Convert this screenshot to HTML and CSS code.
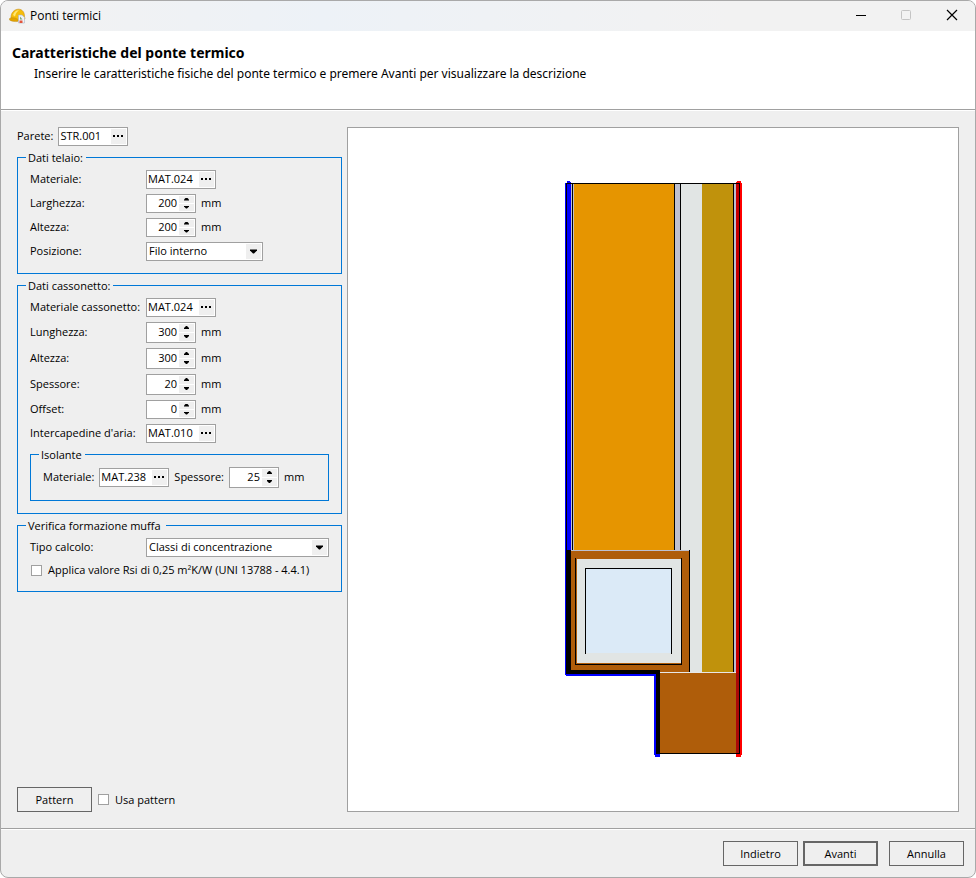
FILE: index.html
```html
<!DOCTYPE html>
<html lang="it">
<head>
<meta charset="utf-8">
<title>Ponti termici</title>
<link rel="stylesheet" href="styles.css">
</head>
<body>
<div class="window">
  <header class="titlebar">
    <svg class="app-icon" width="17" height="16" viewBox="0 0 17 16" aria-hidden="true">
      <path d="M2 9.500C2 5 5 1.200 9.500 1.200c3.800 0 6 3 6 7.300L16 11l-5 2-9-1z" fill="#f5bd0a" stroke="#c98f10" stroke-width=".6"/>
      <path d="M4 7C5 3.500 7.500 2 10 2.200 8.500 3.500 6.500 5 6 8.500z" fill="#ffe873"/>
      <path d="M.5 10.500c2-1.500 6.500-1 9 1.500l-1 1.500c-2.500.3-6.500-.2-8-1.500z" fill="#e2a300" stroke="#b98512" stroke-width=".4"/>
      <path d="M9.500 7h3.500l2.500 2.500V15h-6z" fill="#eef2f8" stroke="#a9b3c4" stroke-width=".6"/>
      <path d="M11 8.500v3h2.500z" fill="#7aa87a"/>
      <path d="M10.500 12.500h3V15h-3z" fill="#e3543a"/>
    </svg>
    <span class="title">Ponti termici</span>
    <div class="window-controls">
      <button type="button" aria-label="Riduci a icona"><svg width="12" height="12" viewBox="0 0 12 12"><path d="M2 6.500h10" stroke="#000"/></svg></button>
      <button type="button" aria-label="Ingrandisci" disabled><svg width="12" height="12" viewBox="0 0 12 12"><rect x="1.500" y="1.500" width="9" height="9" rx="1" fill="none" stroke="#c4c4c4"/></svg></button>
      <button type="button" aria-label="Chiudi"><svg width="12" height="12" viewBox="0 0 12 12"><path d="M1 1l10 10M11 1L1 11" stroke="#000" stroke-width="1.200"/></svg></button>
    </div>
  </header>

  <section class="heading">
    <h1>Caratteristiche del ponte termico</h1>
    <p>Inserire le caratteristiche fisiche del ponte termico e premere Avanti per visualizzare la descrizione</p>
  </section>

  <main class="content">
    <form class="form">
      <div class="row top-row">
        <label for="parete">Parete:</label>
        <span class="picker"><input id="parete" value="STR.001"><button type="button" aria-label="Scegli parete"><i></i><i></i><i></i></button></span>
      </div>

      <fieldset class="frame-group">
        <legend>Dati telaio:</legend>
        <div class="row"><label class="name" for="t-mat">Materiale:</label><span class="picker"><input id="t-mat" value="MAT.024"><button type="button" aria-label="Scegli materiale"><i></i><i></i><i></i></button></span></div>
        <div class="row"><label class="name" for="t-lar">Larghezza:</label><span class="spin"><input id="t-lar" value="200"><span class="steps"><button type="button" aria-label="Aumenta"></button><button type="button" aria-label="Diminuisci"></button></span></span><span class="unit">mm</span></div>
        <div class="row"><label class="name" for="t-alt">Altezza:</label><span class="spin"><input id="t-alt" value="200"><span class="steps"><button type="button" aria-label="Aumenta"></button><button type="button" aria-label="Diminuisci"></button></span></span><span class="unit">mm</span></div>
        <div class="row"><label class="name" for="t-pos">Posizione:</label><span class="combo"><select id="t-pos"><option>Filo interno</option></select></span></div>
      </fieldset>

      <fieldset class="box-group">
        <legend>Dati cassonetto:</legend>
        <div class="row"><label class="name" for="c-mat">Materiale cassonetto:</label><span class="picker"><input id="c-mat" value="MAT.024"><button type="button" aria-label="Scegli materiale"><i></i><i></i><i></i></button></span></div>
        <div class="row tall"><label class="name" for="c-lun">Lunghezza:</label><span class="spin"><input id="c-lun" value="300"><span class="steps"><button type="button" aria-label="Aumenta"></button><button type="button" aria-label="Diminuisci"></button></span></span><span class="unit">mm</span></div>
        <div class="row tall"><label class="name" for="c-alt">Altezza:</label><span class="spin"><input id="c-alt" value="300"><span class="steps"><button type="button" aria-label="Aumenta"></button><button type="button" aria-label="Diminuisci"></button></span></span><span class="unit">mm</span></div>
        <div class="row tall"><label class="name" for="c-spe">Spessore:</label><span class="spin"><input id="c-spe" value="20"><span class="steps"><button type="button" aria-label="Aumenta"></button><button type="button" aria-label="Diminuisci"></button></span></span><span class="unit">mm</span></div>
        <div class="row"><label class="name" for="c-off">Offset:</label><span class="spin"><input id="c-off" value="0"><span class="steps"><button type="button" aria-label="Aumenta"></button><button type="button" aria-label="Diminuisci"></button></span></span><span class="unit">mm</span></div>
        <div class="row"><label class="name" for="c-int">Intercapedine d'aria:</label><span class="picker"><input id="c-int" value="MAT.010"><button type="button" aria-label="Scegli materiale"><i></i><i></i><i></i></button></span></div>
        <fieldset class="insulation">
          <legend>Isolante</legend>
          <div class="row tall">
            <label for="i-mat">Materiale:</label><span class="picker"><input id="i-mat" value="MAT.238"><button type="button" aria-label="Scegli materiale"><i></i><i></i><i></i></button></span>
            <label for="i-spe">Spessore:</label><span class="spin"><input id="i-spe" value="25"><span class="steps"><button type="button" aria-label="Aumenta"></button><button type="button" aria-label="Diminuisci"></button></span></span><span class="unit">mm</span>
          </div>
        </fieldset>
      </fieldset>

      <fieldset class="mould-group">
        <legend class="wide">Verifica formazione muffa</legend>
        <div class="row"><label class="name" for="calc">Tipo calcolo:</label><span class="combo fill"><select id="calc"><option>Classi di concentrazione</option></select></span></div>
        <label class="check"><input type="checkbox">Applica valore Rsi di 0,25 m²K/W (UNI 13788 - 4.4.1)</label>
      </fieldset>

      <div class="pattern-row">
        <button type="button" class="btn">Pattern</button>
        <label class="check"><input type="checkbox">Usa pattern</label>
      </div>
    </form>

    <div class="preview">
      <svg width="180" height="579" viewBox="563 180 180 579" shape-rendering="crispEdges" role="img" aria-label="Sezione del ponte termico">
        <path d="M567 183h173v490H567z" fill="#bec0d0"/>
        <path d="M574 184h100v366H574z" fill="#e69500"/>
        <path d="M681 184h21v489h-21z" fill="#e1e5e4"/>
        <path d="M702 184h31v489h-31z" fill="#c0920c"/>
        <path d="M572 184h1v366h-1zM674 184h1v366h-1zM680 184h1v366h-1zM733 184h1v489h-1z" fill="#000"/>
        <path d="M571 550h119v123H571z" fill="#af5d0a"/>
        <path d="M567 550h122v1H567z" fill="#bec0d0"/>
        <path d="M689 550h1v122h-1z" fill="#000"/>
        <path d="M577 559h104v104H577z" fill="#e1e5e4"/>
        <path d="M575 558h1v106h105V558h1v107H575z" fill="#000"/>
        <path d="M586 569h85v84h-85z" fill="#dbeaf7"/>
        <path d="M585 568h87v86h-1v-85h-85v85h-1z" fill="#000"/>
        <path d="M659 673h81v80h-81z" fill="#af5d0a"/>
        <path d="M657 672h80v1h-80z" fill="#e8e8e8"/>
        <path d="M567 181h3v1h1v369h-5V183h1z" fill="#00f"/>
        <path d="M565 183h2v492h-2z" fill="#00f"/>
        <path d="M566 673h91v3h-91zM654 674h3v81h-3zM655 754h5v3h-5z" fill="#00f"/>
        <path d="M566 550h5v120h89v84h-4v-80h-90z" fill="#000"/>
        <path d="M566 183h1v368h-1z" fill="#000"/>
        <path d="M736 183h3v490h-3z" fill="#c80000"/>
        <path d="M736 673h3v80h-3z" fill="#aa0808"/>
        <path d="M740 183h2v572h-1v2h-5v-3h4zM737 181h4v2h-5v-1h1z" fill="#f00"/>
        <path d="M566 183h174v571h-81v-1h80V184H566z" fill="#000"/>
      </svg>
    </div>
  </main>

  <footer class="actions">
    <button type="button" class="btn">Indietro</button>
    <button type="button" class="btn default">Avanti</button>
    <button type="button" class="btn cancel">Annulla</button>
  </footer>
</div>
</body>
</html>
```
FILE: styles.css
```css
* { box-sizing: border-box; }
html, body { height: 100%; }
body {
  margin: 0;
  background: #fff;
  color: #000;
  font: 11px/16px "Open Sans", "Noto Sans", sans-serif;
}
input, select, button { font: inherit; color: inherit; margin: 0; padding: 0; border-radius: 0; }

.window {
  display: flex;
  flex-direction: column;
  min-height: 100%;
  border: 1px solid #a9a9a9;
  border-radius: 8px;
  background: #efefef;
  overflow: hidden;
}

.titlebar {
  display: flex;
  align-items: center;
  height: 30px;
  padding-left: 8px;
  background: linear-gradient(90deg, #f2f2f2, #edf2f7 33%, #f2f2f2 75%);
}
.title { margin-left: 4px; font-size: 12px; }
.window-controls { display: flex; align-self: flex-start; margin-left: auto; }
.window-controls button {
  display: grid;
  place-items: center;
  width: 46px;
  height: 28px;
  border: 0;
  background: none;
}

.heading {
  height: 79px;
  padding: 13px 11px;
  background: #fff;
  border-bottom: 1px solid #a0a0a0;
  font-family: "Noto Sans", "Open Sans", sans-serif;
}
h1 { margin: 0; font-size: 14px; line-height: 18px; }
.heading p { margin: 4px 0 0 22px; font-size: 12px; line-height: 16px; }

.content {
  display: flex;
  flex: 1;
  gap: 5px;
  padding: 16px;
  border-top: 1px solid #fff;
}
.form { display: flex; flex-direction: column; flex: 0 0 325px; }
.preview {
  flex: 1;
  display: grid;
  place-items: center;
  background: #fff;
  border: 1px solid #a0a0a0;
}
.preview svg { display: block; }

.row { display: flex; align-items: center; height: 24px; }
.row.tall { height: 26px; }
.top-row { height: 18px; gap: 5px; margin-bottom: 3px; }
.name { width: 116px; white-space: nowrap; }
.unit { margin-left: 5px; }

fieldset { margin: 0; padding: 1px 12px 0; border: 1px solid #0078d7; min-width: 0; }
legend { margin-left: -4px; padding: 2px 3px 0 2px; line-height: 16px; }
.frame-group { height: 126px; }
.box-group { height: 238px; margin-top: 2px; }
.mould-group { height: 76px; margin-top: 2px; }
.mould-group .check { padding-left: 1px; }
.insulation { height: 56px; }
.insulation .row { gap: 5px; }
.insulation .unit { margin: 0; }
legend.wide { padding-right: 5px; }

.picker, .spin, .combo {
  display: flex;
  height: 19px;
  border: 1px solid #a0a0a0;
  background: #fff;
}
.picker { width: 70px; padding: 1px; }
.spin { width: 50px; padding: 1px; }
.tall .spin { height: 21px; }
.picker input, .spin input { flex: 1; min-width: 0; border: 0; background: none; outline: 0; }
.spin input { text-align: right; padding-right: 2px; }
.picker button {
  display: flex;
  align-items: center;
  gap: 2px;
  width: 15px;
  padding-left: 2px;
  border: 0;
  background: #efefef;
}
.picker i { width: 2px; height: 2px; background: #000; }
.steps { display: flex; flex-direction: column; gap: 1px; width: 15px; }
.steps button { flex: 1; display: grid; place-items: center; min-height: 0; border: 0; background: #efefef; }
.steps button::before {
  content: "";
  width: 5px;
  height: 3px;
  background: #000;
  clip-path: polygon(2px 0, 3px 0, 5px 2px, 5px 3px, 0 3px, 0 2px);
}
.steps button:last-child::before { clip-path: polygon(0 0, 5px 0, 5px 1px, 3px 3px, 2px 3px, 0 1px); }

.combo { position: relative; width: 117px; }
.combo.fill { flex: 1; }
.combo select {
  appearance: none;
  width: 100%;
  padding: 0 18px 0 2px;
  border: 0;
  background: none;
  outline: 0;
}
.combo::before, .combo::after {
  content: "";
  position: absolute;
  top: 1px;
  right: 1px;
  bottom: 1px;
  width: 15px;
  pointer-events: none;
}
.combo::before { background: #efefef; }
.combo::after {
  background: #000;
  clip-path: polygon(4px 6px, 11px 6px, 11px 7px, 8px 10px, 7px 10px, 4px 7px);
}

.check { display: flex; align-items: center; gap: 6px; height: 22px; }
.check input {
  appearance: none;
  width: 11px;
  height: 11px;
  border: 1px solid #a0a0a0;
  background: #fff;
}

.pattern-row { display: flex; align-items: center; gap: 6px; margin-top: auto; }
.btn {
  width: 75px;
  height: 25px;
  border: 1px solid #666;
  background: #efefef;
}
.btn.default { border-width: 2px; }
.btn.cancel { margin-left: 6px; }

.actions {
  display: flex;
  justify-content: flex-end;
  gap: 5px;
  height: 49px;
  padding: 12px 11px 0;
  border-top: 1px solid #a0a0a0;
  box-shadow: inset 0 1px #fff;
}
```
